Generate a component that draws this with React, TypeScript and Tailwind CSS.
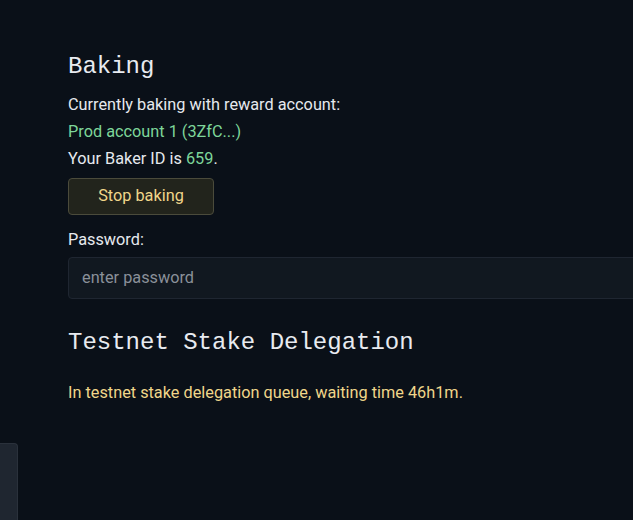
import React from "react";

export default function App() {
  const sans = { fontFamily: 'Roboto, "Noto Sans", sans-serif' };
  return (
    <div className="relative w-[633px] h-[520px] overflow-hidden bg-[#0a1018] text-[#e6e9ee]" style={sans}>
      <div className="pl-[68px] pt-[50px]">
        <h2 className="text-[24px] leading-[34px] text-[#e8ebf0] font-['Liberation_Mono',monospace]">Baking</h2>
        <div className="mt-[7px] text-[16.3px] leading-[27px]">
          <div>Currently baking with reward account:</div>
          <div className="text-[#7ed69a]">Prod account 1 (3ZfC...)</div>
          <div>
            Your Baker ID is <span className="text-[#7ed69a]">659</span>.
          </div>
        </div>
        <button className="mt-[6px] w-[146px] h-[37px] rounded-[4px] border border-[#4b4b3b] bg-[#22241c] text-[16.3px] text-[#f0d68a]">
          Stop baking
        </button>
        <div className="mt-[13px] text-[16.3px] leading-[24px]">Password:</div>
        <div className="mt-[5px] h-[42px] w-[600px] rounded-[4px] border border-[#1f2631] bg-[#111820] flex items-center pl-[13px] text-[16.3px] text-[#8a9099]">
          enter password
        </div>
        <h2 className="mt-[27px] text-[24px] leading-[34px] text-[#e8ebf0] font-['Liberation_Mono',monospace]">Testnet Stake Delegation</h2>
        <div className="mt-[21px] text-[16.3px] leading-[24px] text-[#f0d68a]">
          In testnet stake delegation queue, waiting time 46h1m.
        </div>
      </div>
      <div className="absolute left-0 top-[443px] w-[18px] h-[80px] rounded-tr-[4px] bg-[#1f2630] border-r border-t border-[#2a313b]" />
    </div>
  );
}
